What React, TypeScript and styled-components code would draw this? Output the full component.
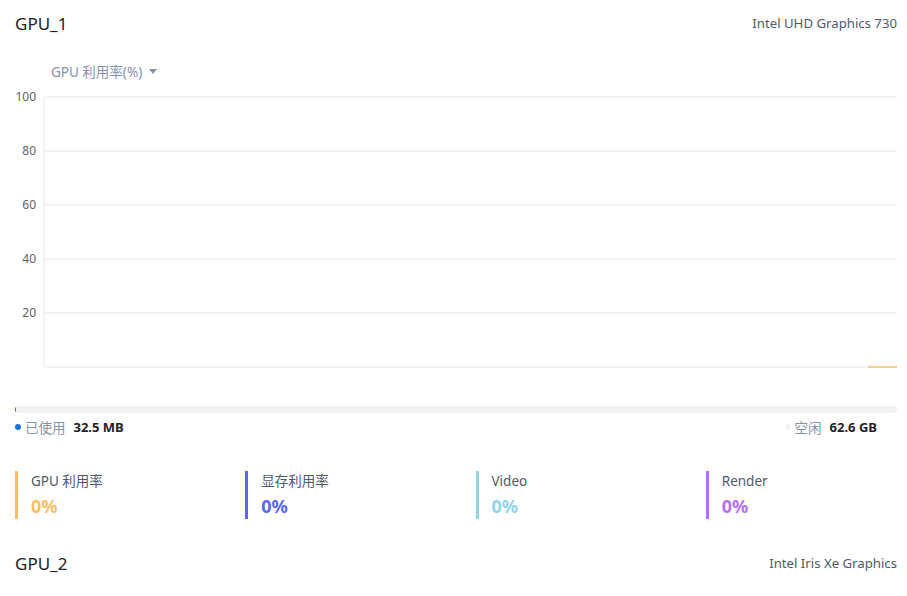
import React from 'react';
import styled, { createGlobalStyle } from 'styled-components';

const GlobalStyle = createGlobalStyle`
  body {
    margin: 0;
    background: #ffffff;
    font-family: "Noto Sans", "Noto Sans CJK SC", sans-serif;
  }
`;

const StyledPage = styled.div`
  display: flex;
  flex-direction: column;
  padding: 0 10px 0 15px;
  width: 907px;
  box-sizing: border-box;
`;

const StyledHeader = styled.div<{ $gap?: number }>`
  display: flex;
  align-items: center;
  justify-content: space-between;
  height: 46px;
  margin-top: ${(p) => p.$gap ?? 0}px;
`;

const StyledTitle = styled.div`
  font-size: 17px;
  color: #1d2129;
`;

const StyledModel = styled.div`
  font-size: 13.2px;
  color: #4e5969;
`;

const StyledChartLegend = styled.div`
  display: flex;
  align-items: center;
  gap: 7px;
  margin-top: 16px;
  padding-left: 36px;
  height: 18px;
  font-size: 13.5px;
  color: #8592ab;
`;

const StyledCaret = styled.span`
  width: 0;
  height: 0;
  border-left: 4px solid transparent;
  border-right: 4px solid transparent;
  border-top: 5px solid #8592ab;
  margin-top: 1px;
`;

const StyledChart = styled.svg`
  display: block;
  width: 882px;
  height: 300px;
`;

const StyledBar = styled.div`
  margin-top: 26px;
  height: 7px;
  border-radius: 4px;
  background: #f2f3f5;
  overflow: hidden;
`;

const StyledBarFill = styled.div`
  height: 100%;
  background: #1f6fe5;
`;

const StyledUsage = styled.div`
  display: flex;
  align-items: center;
  justify-content: space-between;
  height: 18px;
  margin-top: 5px;
  padding-right: 20px;
`;

const StyledUsageItem = styled.div`
  display: flex;
  align-items: center;
  font-size: 13px;
`;

const StyledDot = styled.span<{ $color: string }>`
  width: 6px;
  height: 6px;
  border-radius: 50%;
  background: ${(p) => p.$color};
  margin: 0 4px 0 0;
`;

const StyledUsageLabel = styled.span`
  color: #8592ab;
  font-size: 13.5px;
  margin-right: 8px;
`;

const StyledUsageValue = styled.span`
  color: #1d2129;
  font-weight: 700;
`;

const StyledStats = styled.div`
  display: grid;
  grid-template-columns: repeat(4, 1fr);
  column-gap: 39px;
  margin-top: 35px;
`;

const StyledStat = styled.div<{ $color: string }>`
  display: flex;
  flex-direction: column;
  border-left: 3px solid ${(p) => p.$color};
  padding-left: 13px;
  height: 48px;
`;

const StyledStatLabel = styled.div`
  font-size: 13.5px;
  line-height: 20px;
  color: #4e5969;
`;

const StyledStatValue = styled.div<{ $color: string }>`
  margin-top: 2px;
  font-size: 18px;
  line-height: 26px;
  font-weight: 700;
  color: ${(p) => p.$color};
`;

const stats = [
  { label: 'GPU 利用率', value: '0%', color: '#fbbf62' },
  { label: '显存利用率', value: '0%', color: '#5967f0' },
  { label: 'Video', value: '0%', color: '#8fd4e8' },
  { label: 'Render', value: '0%', color: '#b36ff6' },
];

const ticks = [100, 80, 60, 40, 20];

const UsageChart = () => {
  const top = 17;
  const step = 54;
  const left = 29;
  const right = 882;
  const bottom = top + step * 5;
  return (
    <StyledChart viewBox="0 0 882 300">
      {ticks.map((t, i) => (
        <g key={t}>
          <line x1={left} x2={right} y1={top + i * step} y2={top + i * step} stroke="#eef0f4" strokeWidth="1.5" />
          <text
            x={21}
            y={top + i * step + 4}
            textAnchor="end"
            fontSize="12"
            fill="#606266"
            fontFamily='"Noto Sans", sans-serif'
          >
            {t}
          </text>
        </g>
      ))}
      <line x1={left} x2={left} y1={top} y2={bottom} stroke="#eef0f4" strokeWidth="1.5" />
      <line x1={left} x2={right} y1={bottom} y2={bottom} stroke="#eef0f4" strokeWidth="1.5" />
      <line x1={853} x2={right} y1={bottom} y2={bottom} stroke="#fbbf62" strokeWidth="1.5" />
    </StyledChart>
  );
};

const App = () => (
  <>
    <GlobalStyle />
    <StyledPage>
      <StyledHeader>
        <StyledTitle>GPU_1</StyledTitle>
        <StyledModel>Intel UHD Graphics 730</StyledModel>
      </StyledHeader>
      <StyledChartLegend>
        GPU 利用率(%)
        <StyledCaret />
      </StyledChartLegend>
      <UsageChart />
      <StyledBar>
        <StyledBarFill style={{ width: '0.1%' }} />
      </StyledBar>
      <StyledUsage>
        <StyledUsageItem>
          <StyledDot $color="#1f6fe5" />
          <StyledUsageLabel>已使用</StyledUsageLabel>
          <StyledUsageValue>32.5 MB</StyledUsageValue>
        </StyledUsageItem>
        <StyledUsageItem>
          <StyledDot $color="#f2f3f5" />
          <StyledUsageLabel>空闲</StyledUsageLabel>
          <StyledUsageValue>62.6 GB</StyledUsageValue>
        </StyledUsageItem>
      </StyledUsage>
      <StyledStats>
        {stats.map((s) => (
          <StyledStat key={s.label} $color={s.color}>
            <StyledStatLabel>{s.label}</StyledStatLabel>
            <StyledStatValue $color={s.color}>{s.value}</StyledStatValue>
          </StyledStat>
        ))}
      </StyledStats>
      <StyledHeader $gap={21}>
        <StyledTitle>GPU_2</StyledTitle>
        <StyledModel>Intel Iris Xe Graphics</StyledModel>
      </StyledHeader>
    </StyledPage>
  </>
);

export default App;
